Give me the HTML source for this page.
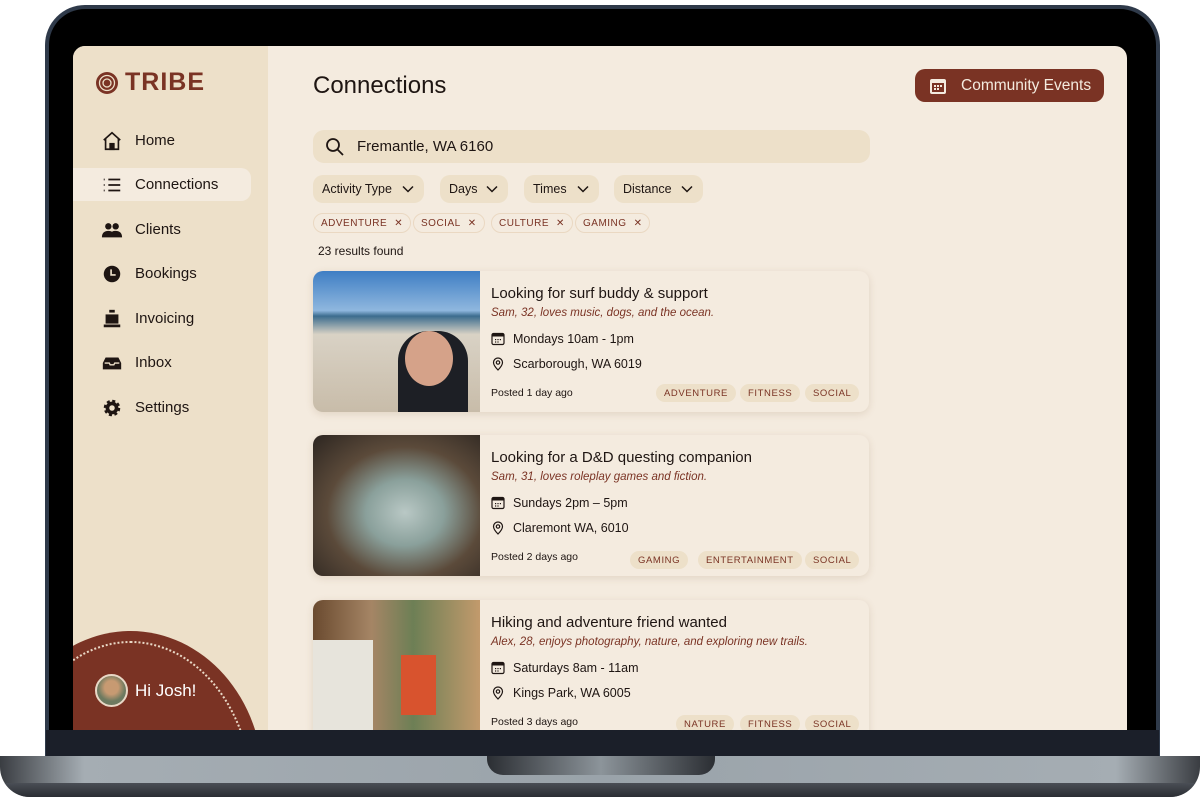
<!DOCTYPE html>
<html><head><meta charset="utf-8"><style>
*{box-sizing:border-box;margin:0;padding:0}
html,body{width:1200px;height:800px;overflow:hidden}
body{background:#fff;position:relative;font-family:"Liberation Sans",sans-serif;color:#1e1512}
.bezel{position:absolute;left:45px;top:5px;width:1115px;height:751px;background:#000;border-radius:40px 40px 0 0;border:4px solid #2f3a4a;border-bottom:none}
.chin{position:absolute;left:46px;top:730px;width:1113px;height:27px;background:#1b1f29}
.base{position:absolute;left:0;top:756px;width:1200px;height:41px;background:linear-gradient(90deg,#3a3d42 0%,#a5adb3 7%,#9aa3aa 50%,#a5adb3 93%,#3a3d42 100%);border-radius:0 0 30px 30px;overflow:hidden}
.base:after{content:"";position:absolute;left:0;right:0;bottom:0;height:14px;background:linear-gradient(#4a4e55,#2a2d33)}
.notch{position:absolute;left:487px;top:756px;width:228px;height:19px;background:linear-gradient(90deg,#2b2e33,#8c949a 50%,#2b2e33);border-radius:0 0 16px 16px;z-index:2}
.screen{position:absolute;left:73px;top:46px;width:1054px;height:684px;background:#f4ebdf;border-radius:12px 12px 0 0;overflow:hidden}
.side{position:absolute;left:0;top:0;width:195px;height:684px;background:#ede0c9;overflow:hidden}
.logo{position:absolute;left:22px;top:22px;display:flex;align-items:center;gap:6px;color:#7a3324;font-weight:bold;font-size:25px;letter-spacing:1px}
.nav{position:absolute;left:0;width:178px;height:33px;display:flex;align-items:center;font-size:15px;padding-left:28px;gap:12px}
.nav.act{background:#f4ebdf;border-radius:0 10px 10px 0}
.nav svg{width:22px;height:22px}
.blob{position:absolute;left:-75px;top:585px;width:265px;height:300px;background:#7a3324;border-radius:50% 50% 0 0}
.blob:before{content:"";position:absolute;left:10px;top:10px;right:10px;bottom:-20px;border:2px dotted #e9d8c6;border-radius:50% 50% 0 0}
.hi{position:absolute;left:22px;top:628px;display:flex;align-items:center;gap:7px;color:#fff;font-size:17px}
.av{width:33px;height:33px;border-radius:50%;background:radial-gradient(circle at 50% 40%,#c79a72 30%,#6d7a60 60%);border:2px solid #e9d8c6}
h1{position:absolute;left:240px;top:26px;font-weight:normal;font-size:24px}
.ce{position:absolute;left:842px;top:23px;width:189px;height:33px;background:#7a3324;border-radius:10px;color:#f4ebdf;font-size:15px;display:flex;align-items:center;padding-left:14px;gap:14px}
.search{position:absolute;left:240px;top:84px;width:557px;height:33px;background:#ede0c9;border-radius:11px;display:flex;align-items:center;padding-left:12px;gap:12px;font-size:15px}
.fl{position:absolute;top:129px;height:28px;background:#ede0c9;border-radius:10px;font-size:12.5px;display:flex;align-items:center;justify-content:space-between;padding:0 9px}
.chip{position:absolute;top:167px;height:20px;border:1px solid #ead8c2;border-radius:10px;font-size:10px;color:#7a3324;letter-spacing:.5px;display:flex;align-items:center;padding:0 7px;gap:7px}
.res{position:absolute;left:245px;top:198px;font-size:12px}
.card{position:absolute;left:240px;width:556px;height:141px;background:#f4ebdf;border-radius:10px;box-shadow:0 2px 8px rgba(120,80,40,.15);overflow:hidden}
.img{position:absolute;left:0;top:0;width:167px;height:141px;overflow:hidden}
.ct{position:absolute;left:178px;top:14px;font-size:15px}
.cs{position:absolute;left:178px;top:36px;font-size:11.5px;font-style:italic;color:#7a3324}
.cl{position:absolute;left:178px;font-size:12.5px;display:flex;align-items:center;gap:8px}
.cp{position:absolute;left:178px;font-size:10.5px}
.tag{position:absolute;height:18px;background:#ede0c9;border-radius:9px;font-size:9.5px;color:#7a3324;letter-spacing:.6px;display:flex;align-items:center;padding:0 8px}
</style></head><body>
<svg width="0" height="0" style="position:absolute"><defs>
<symbol id="cal" viewBox="0 0 14 14"><rect x="1" y="1.5" width="12" height="11" rx="1.5" fill="none" stroke="#1e1512" stroke-width="1.2"/><rect x="1" y="1.5" width="12" height="3" fill="#1e1512"/><g fill="#1e1512"><rect x="4" y="7" width="1.2" height="1.2"/><rect x="6.4" y="7" width="1.2" height="1.2"/><rect x="8.8" y="7" width="1.2" height="1.2"/><rect x="4" y="9.4" width="1.2" height="1.2"/><rect x="6.4" y="9.4" width="1.2" height="1.2"/></g></symbol>
<symbol id="pin" viewBox="0 0 14 14"><path d="M7 13s-4.5-4.5-4.5-7.5a4.5 4.5 0 019 0C11.5 8.5 7 13 7 13z" fill="none" stroke="#1e1512" stroke-width="1.2"/><circle cx="7" cy="5.5" r="1.7" fill="none" stroke="#1e1512" stroke-width="1.2"/></symbol>
<symbol id="chev" viewBox="0 0 14 14"><path d="M2 4.5l5 5 5-5" fill="none" stroke="#1e1512" stroke-width="1.5"/></symbol>
</defs></svg>
<div class="bezel"></div>
<div class="chin"></div>
<div class="base"></div><div class="notch"></div>
<div class="screen">
 <div class="side">
  <div class="logo"><svg width="24" height="24" viewBox="0 0 24 24"><circle cx="12" cy="12" r="11" fill="#7a3324"/><circle cx="12" cy="12" r="7.5" fill="none" stroke="#ede0c9" stroke-width="1.3"/><circle cx="12" cy="12" r="4" fill="none" stroke="#ede0c9" stroke-width="1.3"/></svg>TRIBE</div>
  <div class="nav" style="top:78px"><svg viewBox="0 0 24 24" fill="none" stroke="#1e1512" stroke-width="1.8"><path d="M3 11l9-8 9 8M5 9v12h14V9"/><rect x="10" y="15" width="4" height="6" fill="#1e1512"/></svg>Home</div>
  <div class="nav act" style="top:122px"><svg viewBox="0 0 24 24" stroke="#1e1512" stroke-width="1.8"><path d="M3 6h1M3 12h1M3 18h1M8 6h13M8 12h13M8 18h13"/></svg>Connections</div>
  <div class="nav" style="top:167px"><svg viewBox="0 0 24 24" fill="#1e1512"><circle cx="8" cy="8" r="3.5"/><circle cx="16" cy="8" r="3.5"/><path d="M1 20c0-5 3-7 7-7s7 2 7 7zM13 20c0-3 0-5-1-6 1-1 3-1 4-1 4 0 7 2 7 7z"/></svg>Clients</div>
  <div class="nav" style="top:211px"><svg viewBox="0 0 24 24"><circle cx="12" cy="12" r="9" fill="#1e1512"/><path d="M11 7v6h5" stroke="#ede0c9" stroke-width="1.8" fill="none"/></svg>Bookings</div>
  <div class="nav" style="top:256px"><svg viewBox="0 0 24 24" fill="#1e1512"><rect x="9" y="2" width="6" height="3"/><rect x="5" y="7" width="14" height="10"/><rect x="3" y="18" width="18" height="3"/></svg>Invoicing</div>
  <div class="nav" style="top:300px"><svg viewBox="0 0 24 24" fill="#1e1512"><path d="M2 12l3-6h14l3 6v7H2z"/><path d="M4 12h5l1 2h4l1-2h5" stroke="#ede0c9" stroke-width="1.5" fill="none"/></svg>Inbox</div>
  <div class="nav" style="top:345px"><svg viewBox="0 0 24 24"><circle cx="12" cy="12" r="7" fill="#1e1512" stroke="#1e1512" stroke-width="4" stroke-dasharray="3 2.5"/><circle cx="12" cy="12" r="3" fill="#ede0c9"/></svg>Settings</div>
  <div class="blob"></div>
  <div class="hi"><div class="av"></div>Hi Josh!</div>
 </div>
 <h1>Connections</h1>
 <div class="ce"><svg width="18" height="18" viewBox="0 0 18 18"><rect x="1" y="2" width="16" height="15" rx="2" fill="#f4ebdf"/><rect x="3" y="6" width="12" height="9" fill="#7a3324"/><g fill="#f4ebdf"><rect x="5" y="8" width="2" height="2"/><rect x="8" y="8" width="2" height="2"/><rect x="11" y="8" width="2" height="2"/><rect x="5" y="11" width="2" height="2"/><rect x="8" y="11" width="2" height="2"/></g></svg><span style="font-size:15.5px">Community Events</span></div>
 <div class="search"><svg width="20" height="20" viewBox="0 0 20 20" fill="none" stroke="#1e1512" stroke-width="1.8"><circle cx="8" cy="8" r="6"/><path d="M12.5 12.5L18 18"/></svg>Fremantle, WA 6160</div>
 <div class="fl" style="left:240px;width:111px">Activity Type <svg width="14" height="14"><use href="#chev"/></svg></div>
 <div class="fl" style="left:367px;width:68px">Days <svg width="14" height="14"><use href="#chev"/></svg></div>
 <div class="fl" style="left:451px;width:75px">Times <svg width="14" height="14"><use href="#chev"/></svg></div>
 <div class="fl" style="left:541px;width:89px">Distance <svg width="14" height="14"><use href="#chev"/></svg></div>
 <div class="chip" style="left:240px">ADVENTURE <span>✕</span></div>
 <div class="chip" style="left:340px">SOCIAL <span>✕</span></div>
 <div class="chip" style="left:418px">CULTURE <span>✕</span></div>
 <div class="chip" style="left:502px">GAMING <span>✕</span></div>
 <div class="res">23 results found</div>

 <div class="card" style="top:225px">
  <div class="img" style="background:linear-gradient(180deg,#3f7ec4 0%,#8fb7de 28%,#3c6c8e 32%,#d9d2c5 45%,#c8bca9 100%)"><div style="position:absolute;left:85px;top:60px;width:70px;height:81px;background:#1d1f25;border-radius:30px 30px 0 0"></div><div style="position:absolute;left:92px;top:60px;width:48px;height:55px;background:#d5a289;border-radius:50%"></div></div>
  <div class="ct">Looking for surf buddy &amp; support</div>
  <div class="cs">Sam, 32, loves music, dogs, and the ocean.</div>
  <div class="cl" style="top:61px"><svg width="14" height="14"><use href="#cal"/></svg>Mondays 10am - 1pm</div>
  <div class="cl" style="top:86px"><svg width="14" height="14"><use href="#pin"/></svg>Scarborough, WA 6019</div>
  <div class="cp" style="top:116px">Posted 1 day ago</div>
  <div class="tag" style="left:343px;top:113px">ADVENTURE</div>
  <div class="tag" style="left:427px;top:113px">FITNESS</div>
  <div class="tag" style="left:492px;top:113px">SOCIAL</div>
 </div>
 <div class="card" style="top:389px">
  <div class="img" style="background:radial-gradient(ellipse at 55% 55%,#b9c8c5 0%,#8aa09b 30%,#5b4a3a 60%,#2c2520 100%)"></div>
  <div class="ct">Looking for a D&amp;D questing companion</div>
  <div class="cs">Sam, 31, loves roleplay games and fiction.</div>
  <div class="cl" style="top:61px"><svg width="14" height="14"><use href="#cal"/></svg>Sundays 2pm – 5pm</div>
  <div class="cl" style="top:86px"><svg width="14" height="14"><use href="#pin"/></svg>Claremont WA, 6010</div>
  <div class="cp" style="top:116px">Posted 2 days ago</div>
  <div class="tag" style="left:317px;top:116px">GAMING</div>
  <div class="tag" style="left:385px;top:116px">ENTERTAINMENT</div>
  <div class="tag" style="left:492px;top:116px">SOCIAL</div>
 </div>
 <div class="card" style="top:554px">
  <div class="img" style="background:linear-gradient(90deg,#6a4a2f 0%,#a58565 35%,#6d7f55 60%,#c29a6c 100%)"><div style="position:absolute;left:0;top:40px;width:60px;height:101px;background:#e7e4dc"></div><div style="position:absolute;left:88px;top:55px;width:35px;height:60px;background:#d8532e"></div></div>
  <div class="ct">Hiking and adventure friend wanted</div>
  <div class="cs">Alex, 28, enjoys photography, nature, and exploring new trails.</div>
  <div class="cl" style="top:61px"><svg width="14" height="14"><use href="#cal"/></svg>Saturdays 8am - 11am</div>
  <div class="cl" style="top:86px"><svg width="14" height="14"><use href="#pin"/></svg>Kings Park, WA 6005</div>
  <div class="cp" style="top:116px">Posted 3 days ago</div>
  <div class="tag" style="left:363px;top:115px">NATURE</div>
  <div class="tag" style="left:427px;top:115px">FITNESS</div>
  <div class="tag" style="left:492px;top:115px">SOCIAL</div>
 </div>
</div>
</body></html>
